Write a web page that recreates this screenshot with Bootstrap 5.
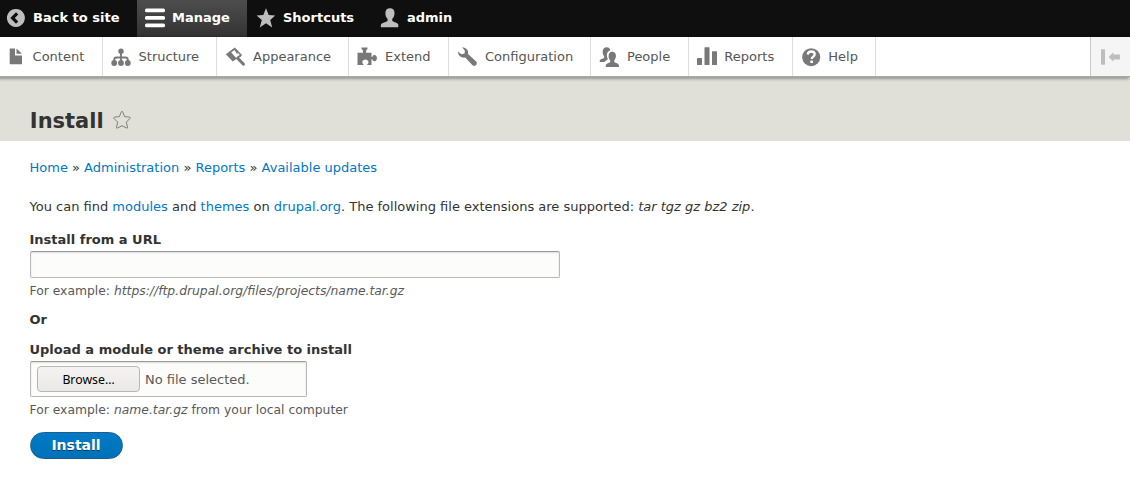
<!DOCTYPE html>
<html lang="en">
<head>
<meta charset="utf-8">
<meta name="viewport" content="width=device-width, initial-scale=1">
<title>Install</title>
<link href="https://cdn.jsdelivr.net/npm/bootstrap@5.3.0/dist/css/bootstrap.min.css" rel="stylesheet">
<style>
  body { font-family: "DejaVu Sans", sans-serif; font-size: 13px; line-height: 20px; color: #333; background: #fff; }
  a { color: #0074bd; text-decoration: none; }
  .page-main a { color: #0078c4; }
  svg { display: block; flex: none; }
  .admin-bar { height: 37px; background: #0f0f0f; }
  .admin-bar a { color: #fff; font-weight: 700; height: 37px; padding-bottom: 2px; gap: 8px; padding-left: 8px; }
  .admin-bar svg { fill: #bebebe; }
  .admin-bar .tab-back { width: 137px; padding-left: 5px; }
  .admin-bar .tab-manage { width: 110px; background: linear-gradient(#4d4d4d, #333); gap: 7px; }
  .admin-bar .tab-manage svg { fill: #fff; }
  .admin-bar .tab-short { width: 124px; }
  .admin-tray { height: 40px; background: #fff; border-bottom: 1px solid #aaa; box-shadow: -2px 1px 3px 1px rgba(0,0,0,.333); position: relative; }
  .admin-tray a { color: #565656; height: 39px; padding-left: 8px; gap: 8px; border-right: 1px solid #ddd; }
  .admin-tray svg { fill: #787878; }
  .admin-tray .orient { width: 40px; background: #f5f5f5; border-left: 1px solid #c9c9c9; padding-left: 9px; }
  .admin-tray .orient svg { fill: #bebebe; }
  .w-content { width: 103px; } .w-structure { width: 114px; } .w-appearance { width: 132px; }
  .w-extend { width: 100px; } .w-config { width: 142px; } .w-people { width: 98px; }
  .w-reports { width: 104px; } .w-help { width: 83px; }
  .admin-tray .w-content { padding-left: 5px; gap: 7.6px; }
  .admin-tray .w-structure { gap: 7.6px; }
  .admin-tray .w-reports { gap: 7.3px; }
  .admin-tray .w-help { gap: 7.3px; }
  .page-head { height: 64px; background: #e0e0d8; padding: 27px 30px 0; gap: 8.5px; }
  .page-head h1 { font-size: 21px; line-height: 34px; font-weight: 700; margin: 0; text-indent: -.2px; }
  .page-head svg { margin-top: 6px; }
  .page-main { padding: 17px 30px 0; }
  .crumbs, .intro, .field-label, .hint { text-indent: -.5px; }
  .intro { margin: 19px 0 13px; }
  .field-label { font-weight: 700; display: block; line-height: 20px; margin-bottom: 1px; }
  .or-line { margin-bottom: 10px; }
  .hint { font-size: 12.35px; line-height: 20px; color: #595959; }
  .hint-url { margin: 3px 0 9px; }
  .hint-file { margin: 3px 0 12px; }
  .field-box { border: 1px solid #b8b8b8; border-top-color: #999; border-radius: 2px; background: #fcfcfa; box-shadow: inset 0 1px 2px rgba(0,0,0,.125); }
  .url-box { width: 530px; height: 27px; display: block; outline: 0; }
  .file-box { width: 277px; height: 36px; padding: 4px 0 0 6px; gap: 5px; color: #595959; line-height: 27px; }
  .browse-btn { width: 103px; height: 26px; border: 1px solid #b6b6b3; border-radius: 4px; background: linear-gradient(#f4f3f2, #eae9e7); font: 12.3px "Noto Sans", sans-serif; color: #000; padding: 0; }
  .install-btn { width: 93px; height: 27px; border: 1px solid #1e5c90; border-radius: 20px; background: linear-gradient(#007bc6, #0071b8); color: #fff; font-size: 14px; font-weight: 700; line-height: 25px; padding: 0 1px 0 0; text-shadow: 0 1px rgba(0,0,0,.5); display: block; }
</style>
</head>
<body>
<nav class="admin-bar d-flex">
  <a href="#" class="tab-back d-flex align-items-center"><svg width="20" height="20" viewBox="0 0 20 20"><path fill-rule="evenodd" d="M10.900.900a9 9 0 1 0 .01 0zM11 4.200l2.300 2.200L9.800 10l3.500 3.600-2.300 2.200L5.300 10z"/></svg>Back to site</a>
  <a href="#" class="tab-manage d-flex align-items-center"><svg width="20" height="20" viewBox="0 0 20 20"><rect y=".5" width="20" height="3.800" rx="1.500"/><rect y="8" width="20" height="3.800" rx="1.500"/><rect y="15.500" width="20" height="3.800" rx="1.500"/></svg>Manage</a>
  <a href="#" class="tab-short d-flex align-items-center"><svg width="20" height="20" viewBox="0 0 20 20"><path d="M11 .3l2.700 6.800 6.700.3-5.200 4.700 2 7.400L11 15.300l-6.200 4.200 2-7.400L1.600 7.400l6.700-.3z"/></svg>Shortcuts</a>
  <a href="#" class="d-flex align-items-center"><svg width="20" height="20" viewBox="0 0 20 20"><path d="M11 .2c3 0 4.500 1.900 4.500 4.700 0 2.400-.7 4.400-2 5.700-.7 1.400-.3 2.600 1.100 3.200 2.900.9 4.800 1.600 4.800 3.600 0 1-.2 1.900-.5 1.900H2.200c-.3 0-.4-1-.4-1.900 0-2 2.400-2.700 5.400-3.600 1.500-.6 1.900-1.800 1.100-3.200-1.300-1.300-1.900-3.300-1.900-5.700C6.400 2.100 8 .2 11 .2z"/></svg>admin</a>
</nav>
<nav class="admin-tray d-flex">
  <a href="#" class="w-content d-flex align-items-center"><svg width="20" height="20" viewBox="0 0 20 20"><path d="M4.700 1.500H10v7h7v8.800H4.700zM11.500 1.500l5.500 5.300h-5.500z"/></svg>Content</a>
  <a href="#" class="w-structure d-flex align-items-center"><svg width="20" height="20" viewBox="0 0 20 20"><circle cx="10" cy="4.200" r="2.700"/><path d="M10 5v11M3.300 16v-3.500q0-2 2-2h9.400q2 0 2 2V16" fill="none" stroke="#787878" stroke-width="1.900"/><circle cx="3.200" cy="16" r="2.900"/><circle cx="10" cy="16" r="2.900"/><circle cx="16.800" cy="16" r="2.900"/></svg>Structure</a>
  <a href="#" class="w-appearance d-flex align-items-center"><svg width="20" height="20" viewBox="0 0 20 20"><path fill-rule="evenodd" d="M9.800.5L17 8c-.7 1.400-1.700 2.200-3 2.500l5.600 5.800c1.200 1.300-.9 3.300-2.200 2L11.300 12l-3.500 2.500L.8 7.300zM9.500 3L6.200 5.500l5 5.400c.8-1.500 2-2.500 3.700-3l-2.300-2.300-.3 1.900z"/></svg>Appearance</a>
  <a href="#" class="w-extend d-flex align-items-center"><svg width="20" height="20" viewBox="0 0 20 20"><path d="M4.500.5h6v1.700c-1.500.3-1.500 2.700-1.300 3.500h5.300V10c1.500.2 1-1.900 3-2 3 0 3.300 6 .2 6.200-2.200.1-1.700-2.100-3.200-2V18h-4.300c-.2-1 1.400-1.100 1.300-2.800-.1-3.500-6.200-3.500-6.200 0 0 1.700 1.500 1.800 1.200 2.800H.5V5.700H6c.2-.9.1-3.200-1.500-3.500z"/></svg>Extend</a>
  <a href="#" class="w-config d-flex align-items-center"><svg width="20" height="20" viewBox="0 0 20 20"><path d="M5.200.5C9 .1 11.900 3.500 11 6.900l8.200 7.700c2 2.300-1.300 5.600-3.700 3.700L8.300 10.500C4.600 11.300.9 8.300 1 4.800l3.500 2.500 3-.8.4-2.700z"/></svg>Configuration</a>
  <a href="#" class="w-people d-flex align-items-center"><svg width="20" height="20" viewBox="0 0 20 20"><path d="M7.600.2c2.300 0 3.400 1 3.500 3.200-3.200 1-3.900 4.600-2.500 7.900.4 1-.1 1.500-1.600 2.200-.8.400-1.300.9-1.500 1.500H.9c-.9-2.300 1-2.900 3.200-3.600 1.400-.5 1.400-1.500.8-2.500C3 6.200 3 .2 7.600.2z"/><path d="M13.300 4.800c4.500 0 4.200 5.700 2.300 8.300-.7 1.100-.5 2.200.8 2.600 2.500.7 4 1.500 3.500 4.200H6.800c-.4-2.700 1.100-3.500 3.400-4.200 1.300-.5 1.400-1.500.7-2.600-1.900-2.600-2.100-8.300 2.400-8.300z"/></svg>People</a>
  <a href="#" class="w-reports d-flex align-items-center"><svg width="20" height="20" viewBox="0 0 20 20"><rect y="11" width="5" height="7" rx=".5"/><rect x="7.500" y=".300" width="5" height="17.700" rx=".5"/><rect x="15" y="4.300" width="5" height="13.700" rx=".5"/></svg>Reports</a>
  <a href="#" class="w-help d-flex align-items-center"><svg width="20" height="20" viewBox="0 0 20 20"><circle cx="10.200" cy="10.200" r="9"/><path d="M6.700 7.500q.4-3 3.700-3 3.300.1 3.300 2.800 0 1.400-1.700 2.600-1.200.8-1.200 2.100" fill="none" stroke="#fff" stroke-width="2.300"/><rect x="9.300" y="13.400" width="2.700" height="2.600" rx=".5" fill="#fff"/></svg>Help</a>
  <span class="orient ms-auto d-flex align-items-center"><svg width="20" height="20" viewBox="0 0 20 20"><rect x="1" y="2.200" width="4" height="15.500" rx=".4"/><path d="M8.700 10l4.700-4.700v2.200h6.500v5h-6.500v2.200z"/></svg></span>
</nav>
<header class="page-head d-flex">
  <h1>Install</h1>
  <svg width="20" height="20" viewBox="0 0 20 20"><path d="M10 1.400q.6 0 .8.700l1.800 4.500 5 .6q1.200.3.400 1.200l-3.700 3.800 1.200 5q.2 1.400-1 .8L10 15.700 5.500 18q-1.200.6-1-.8l1.200-5L2 8.400q-.8-.9.400-1.200l5-.6 1.800-4.500q.2-.7.800-.7z" fill="none" stroke="#7f806e" stroke-linejoin="round"/></svg>
</header>
<main class="page-main">
  <div class="crumbs"><a href="#">Home</a> » <a href="#">Administration</a> » <a href="#">Reports</a> » <a href="#">Available updates</a></div>
  <p class="intro">You can find <a href="#">modules</a> and <a href="#">themes</a> on <a href="#">drupal.org</a>. The following file extensions are supported: <em>tar tgz gz bz2 zip</em>.</p>
  <form>
    <label class="field-label" for="url">Install from a URL</label>
    <input class="field-box url-box" id="url" type="text">
    <div class="hint hint-url">For example: <em>https://ftp.drupal.org/files/projects/name.tar.gz</em></div>
    <div class="field-label or-line">Or</div>
    <div class="field-label">Upload a module or theme archive to install</div>
    <div class="field-box file-box d-flex align-items-start"><button type="button" class="browse-btn">Browse…</button>No file selected.</div>
    <div class="hint hint-file">For example: <em>name.tar.gz</em> from your local computer</div>
    <button type="button" class="install-btn">Install</button>
  </form>
</main>
<script src="https://cdn.jsdelivr.net/npm/bootstrap@5.3.0/dist/js/bootstrap.bundle.min.js"></script>
</body>
</html>
